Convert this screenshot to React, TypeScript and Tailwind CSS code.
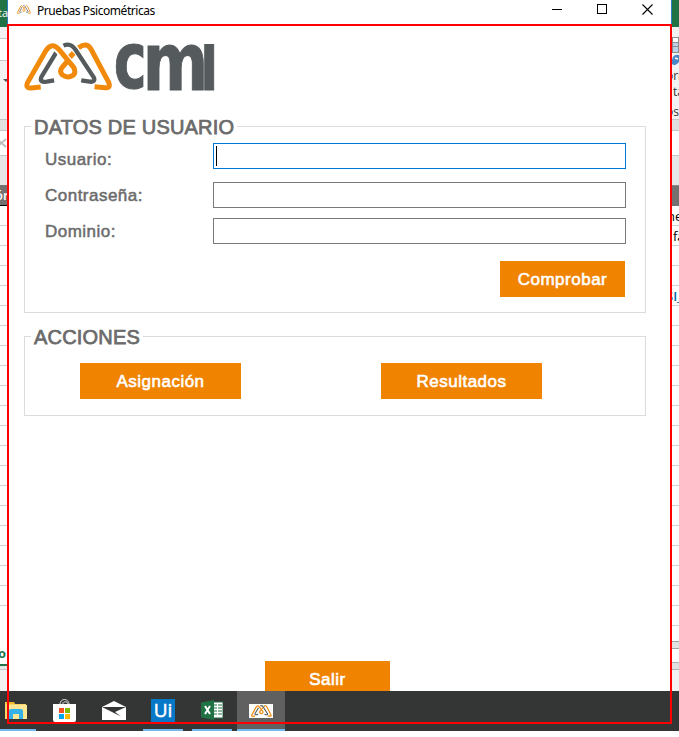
import React from "react";

const rows = Array.from({ length: 21 }, (_, i) => i);

function Mark({ className }: { className: string }) {
  return (
    <svg className={className} viewBox="72 126 266 147" fill="none" preserveAspectRatio="none">
      <g stroke="#555a5c" strokeWidth="13">
        <path d="M162 241 L140 245 Q117 248 124 231 L168 158" />
        <path d="M190 137 Q211 127 226 149 L281 233 Q286 247 268 245 L243 241" />
      </g>
      <path d="M172 147 L226 211" stroke="#fff" strokeWidth="22" />
      <g stroke="#f18a0b" strokeWidth="15">
        <path d="M122 261 L93 264 Q75 265 83 247 L138 151 Q156 124 177 149 L221 203 Q228 219 218 226 Q203 236 187 225 Q176 214 186 202 L205 180" />
        <path d="M235 143 Q260 125 272 147 L325 247 Q332 266 314 263 L283 260" />
      </g>
      <path d="M215 153 L226 164 L215 177 L204 165Z" fill="#f18a0b" />
    </svg>
  );
}

function Logo() {
  return (
    <div className="flex h-[50px] items-start">
      <Mark className="h-[49px] w-[89px] shrink-0" />
      <svg className="h-[50px] w-[103px] shrink-0 overflow-visible" viewBox="0 0 103 50" fill="#555a5c" stroke="#555a5c" strokeWidth="1" fontFamily="DejaVu Sans, sans-serif" fontWeight="700">
        <text x="0.7" y="46.3" fontSize="79" textLength="33" lengthAdjust="spacingAndGlyphs">c</text>
        <text x="29.8" y="47.5" fontSize="80.5" textLength="65.5" lengthAdjust="spacingAndGlyphs">m</text>
        <text x="87.3" y="47.5" fontSize="61.5" textLength="18" lengthAdjust="spacingAndGlyphs">I</text>
      </svg>
    </div>
  );
}

function GridRows() {
  return (
    <>
      {rows.map((r) => (
        <div key={r} className="h-5 shrink-0 border-b border-[#d0d0d0] bg-white" />
      ))}
    </>
  );
}

function LeftStrip() {
  return (
    <div className="flex w-2 shrink-0 flex-col overflow-hidden whitespace-nowrap bg-[#f2f2f2] font-['Open_Sans',sans-serif] text-[12px]">
      <div className="flex h-[27px] shrink-0 items-center border-r border-[#2b7cc0] bg-[#217346] pb-px text-[11px] text-white"><span className="-ml-0.5">ta</span></div>
      <div className="h-[11px] shrink-0" />
      <div className="h-[23px] shrink-0 border-y border-[#c6c6c6] bg-white" />
      <div className="h-[58px] shrink-0 pt-[18px]"><div className="ml-[3px] h-0 w-0 border-x-[3px] border-t-[3px] border-x-transparent border-t-[#555]" /></div>
      <div className="h-3 shrink-0 border-y border-[#c6c6c6] bg-[#e1e1e1]" />
      <div className="flex h-[25px] shrink-0 items-center border-b border-[#c6c6c6] bg-white">
        <svg className="h-2.5 w-[7px]" viewBox="0 0 7 10" fill="none" stroke="#bbb" strokeWidth="1.7"><path d="M-3 1L6 9M-3 9L6 1" /></svg>
      </div>
      <div className="h-[29px] shrink-0 bg-[#e6e6e6]" />
      <div className="flex h-[21px] shrink-0 items-center border-b border-black bg-[#767171] pt-0.5 text-[13px] font-semibold text-white"><span className="-ml-[5px]">ór</span></div>
      <GridRows />
      <div className="-mt-px flex h-[41px] shrink-0 items-end border-b-2 border-[#217346] bg-white pb-[1px] text-[13px] font-bold text-[#217346]"><span className="-ml-0.5">o</span></div>
      <div className="h-1 shrink-0 border-b border-[#c6c6c6] bg-[#e6e6e6]" />
    </div>
  );
}

function RightStrip() {
  return (
    <div className="flex w-2 shrink-0 flex-col overflow-hidden whitespace-nowrap bg-[#f2f2f2] font-['Open_Sans',sans-serif] text-[12px] leading-4 text-[#333]">
      <div className="h-[27px] shrink-0 border-l border-[#2b7cc0] bg-[#217346]" />
      <div className="h-[10px] shrink-0" />
      <svg className="h-[29px] w-2 shrink-0" viewBox="0 0 8 29">
        <path d="M1 0h7v16H1z" fill="#8c8c8c" />
        <path d="M2 1h5v4H2z" fill="#fff" />
        <path d="M2 6h5v3H2zM2 10h5v5H2z" fill="#bdd0e9" />
        <path d="M1 23Q2 17 8 18V25Q4 30 1 27Z" fill="#4a86c5" />
        <path d="M4 21l3 1" stroke="#fff" strokeWidth="1.5" />
      </svg>
      <div className="h-[53px] shrink-0 pt-0.5">
        <div><span className="-ml-[5px]">orr</span></div>
        <div><span className="ml-0.5">tal</span></div>
        <div className="pt-1"><span className="-ml-[5px]">os</span></div>
      </div>
      <div className="h-3 shrink-0 border-y border-[#c6c6c6] bg-[#e1e1e1]" />
      <div className="h-[25px] shrink-0 border-b border-[#c6c6c6] bg-white" />
      <div className="h-[29px] shrink-0 bg-[#e6e6e6]" />
      <div className="h-[21px] shrink-0 border-t border-[#8a8686] bg-[#767171]" />
      {rows.map((r) => (
        <div key={r} className="h-5 shrink-0 border-b border-[#d0d0d0] bg-white text-[13px] leading-[21px] text-black">
          {r === 0 && <span className="-ml-1">ne</span>}
          {r === 1 && <span className="ml-0.5">fa</span>}
          {r === 4 && <span className="-ml-[5px] font-semibold text-[#0563a5]">SI_</span>}
        </div>
      ))}
      <div className="h-[15px] shrink-0 bg-white" />
      <div className="h-2 shrink-0 border-y border-[#a0a0a0] bg-[#e1e1e1]" />
      <div className="h-[13px] shrink-0 bg-white" />
      <div className="h-2 shrink-0 border-y border-[#b0b0b0] bg-[#e1e1e1]" />
    </div>
  );
}

function Field({ label, focused = false }: { label: string; focused?: boolean }) {
  return (
    <div className="flex h-[26px] items-center">
      <div className={"w-[168px] text-[17px] leading-5 tracking-[0.48px] text-[#6b6b6b] [-webkit-text-stroke:0.5px_#6b6b6b] " + (focused ? "pt-[8px]" : "pt-[2px]")}>{label}</div>
      <div className={focused ? "flex h-[26px] w-[413px] items-center border border-[#0078d7] pl-0.5" : "h-[26px] w-[413px] border border-[#7a7a7a]"}>
        {focused && <div className="h-5 w-px bg-black" />}
      </div>
    </div>
  );
}

function Btn({ label, className }: { label: string; className: string }) {
  return (
    <button className={"flex h-9 shrink-0 items-center justify-center bg-[#f08300] pt-[2px] text-[17px] leading-5 tracking-[0.5px] text-white [-webkit-text-stroke:0.6px_white] " + className}>
      {label}
    </button>
  );
}

function Legend({ label }: { label: string }) {
  return (
    <legend className="ml-1.5 h-5 pl-[3px] pr-[3px] text-[20px] leading-[22px] tracking-[0.2px] text-[#6b6b6b] [-webkit-text-stroke:0.75px_#6b6b6b]">{label}</legend>
  );
}

function AppWindow() {
  return (
    <div className="flex min-w-0 flex-1 flex-col bg-white font-['Liberation_Sans',Arial,sans-serif]">
      <header className="flex h-6 shrink-0 items-center">
        <Mark className="mb-[5px] ml-[9px] h-[9px] w-[14px]" />
        <div className="mb-[3px] ml-[6px] font-['Noto_Sans',sans-serif] text-[12px] leading-4 tracking-[-0.44px] text-black">Pruebas Psicométricas</div>
        <div className="mb-[6px] ml-auto mr-[18px] flex h-3 items-center text-black">
          <div className="mr-[35px] h-px w-[10px] bg-black" />
          <div className="mr-[35px] h-[10px] w-[10px] border border-black" />
          <svg className="h-[11px] w-[11px]" viewBox="0 0 11 11" stroke="currentColor" strokeWidth="1.1"><path d="M.5 .5L10.5 10.5M10.5 .5L.5 10.5" /></svg>
        </div>
      </header>
      <main className="flex flex-1 flex-col pl-4 pr-[25px] pt-[18px]">
        <Logo />
        <fieldset className="mt-[24px] h-[197px] shrink-0 border border-[#dcdcdc]">
          <Legend label="DATOS DE USUARIO" />
          <div className="flex flex-col pl-5 pt-[7px]">
            <Field label="Usuario:" focused />
            <div className="h-[13px]" />
            <Field label="Contraseña:" />
            <div className="h-[10px]" />
            <Field label="Dominio:" />
            <Btn label="Comprobar" className="ml-[455px] mt-[17px] w-[125px]" />
          </div>
        </fieldset>
        <fieldset className="mt-[13px] h-[90px] shrink-0 border border-[#dcdcdc]">
          <Legend label="ACCIONES" />
          <div className="flex gap-[140px] pl-[55px] pt-[17px]">
            <Btn label="Asignación" className="w-[161px]" />
            <Btn label="Resultados" className="w-[161px]" />
          </div>
        </fieldset>
        <div className="mt-auto flex h-[30px] overflow-hidden pl-[241px]">
          <Btn label="Salir" className="w-[125px]" />
        </div>
      </main>
    </div>
  );
}

function Taskbar() {
  return (
    <footer className="flex h-10 shrink-0 items-stretch bg-[#343535]">
      <div className="flex w-9 flex-col justify-between border-b-2 border-[#76b9ed] pl-[5px] pt-[10px]">
        <svg className="h-[19px] w-[22px]" viewBox="0 0 22 19">
          <path d="M0 1h9l1 2h11v15H0z" fill="#f8d568" />
          <path d="M2 4h20v14H2z" fill="#ffe694" />
          <path d="M1 1h8v2H1z" fill="#f4b92e" />
          <path d="M4 18V10Q4 8 6 8H16Q18 8 18 10V18H14V13H8V18Z" fill="#35b3e8" />
        </svg>
      </div>
      <div className="flex w-[57px] pl-[17px] pt-2">
        <svg className="h-[23px] w-[23px]" viewBox="0 0 23 23">
          <path d="M7 6V5a4.5 4.5 0 0 1 9 0V6M10 6V3M15 6Q15 2 11 3" fill="none" stroke="#ddd" strokeWidth="1" />
          <path d="M0 5h23v16q0 2-2 2H2q-2 0-2-2z" fill="#fff" />
          <path d="M6 9h5v5H6z" fill="#f25022" /><path d="M12 9h5v5h-5z" fill="#7fba00" />
          <path d="M6 15h5v5H6z" fill="#00a4ef" /><path d="M12 15h5v5h-5z" fill="#ffb900" />
        </svg>
      </div>
      <div className="flex w-[50px] pl-[9px] pt-[10px]">
        <svg className="h-[19px] w-6" viewBox="0 0 24 19"><path d="M0 6L12 0L24 6V19H0Z" fill="#fff" /><path d="M0 6H24L13 11L19 15.5Z" fill="#343535" /></svg>
      </div>
      <div className="flex w-10 items-start border-b-2 border-[#76b9ed] pl-2 pt-2">
        <div className="flex h-[23px] w-6 items-center justify-center bg-[#0778c8] font-['Open_Sans',sans-serif] text-[19px] leading-none text-white [-webkit-text-stroke:0.5px_white]">Ui</div>
      </div>
      <div className="w-[9px]" />
      <div className="flex w-10 border-b-2 border-[#76b9ed] pl-[9px] pt-[9px]">
        <svg className="h-5 w-[22px]" viewBox="0 0 22 20">
          <path d="M11 2H22V18H11Z" fill="#fff" stroke="#207245" />
          <path d="M13 5h3M17 5h4M13 8h3M17 8h4M13 11h3M17 11h4M13 14h3M17 14h4" stroke="#207245" />
          <path d="M0 2.5L13 0V20L0 17.5Z" fill="#207245" />
          <path d="M4 6L9 14M9 6L4 14" stroke="#fff" strokeWidth="2" />
        </svg>
      </div>
      <div className="w-[5px]" />
      <div className="flex w-12 items-start border-b-2 border-[#76b9ed] bg-[#606060] pl-3 pt-[13px]">
        <div className="flex h-[14px] w-6 items-center justify-center bg-white"><Mark className="h-3 w-[21px]" /></div>
      </div>
    </footer>
  );
}

export default function App() {
  return (
    <div className="relative flex h-[737px] w-[679px] flex-col overflow-hidden bg-white">
      <div className="flex h-[691px] shrink-0">
        <LeftStrip />
        <AppWindow />
        <RightStrip />
      </div>
      <Taskbar />
      <div className="pointer-events-none absolute left-[7px] top-6 h-[700px] w-[665px] border-2 border-[#ff0000]" />
    </div>
  );
}
